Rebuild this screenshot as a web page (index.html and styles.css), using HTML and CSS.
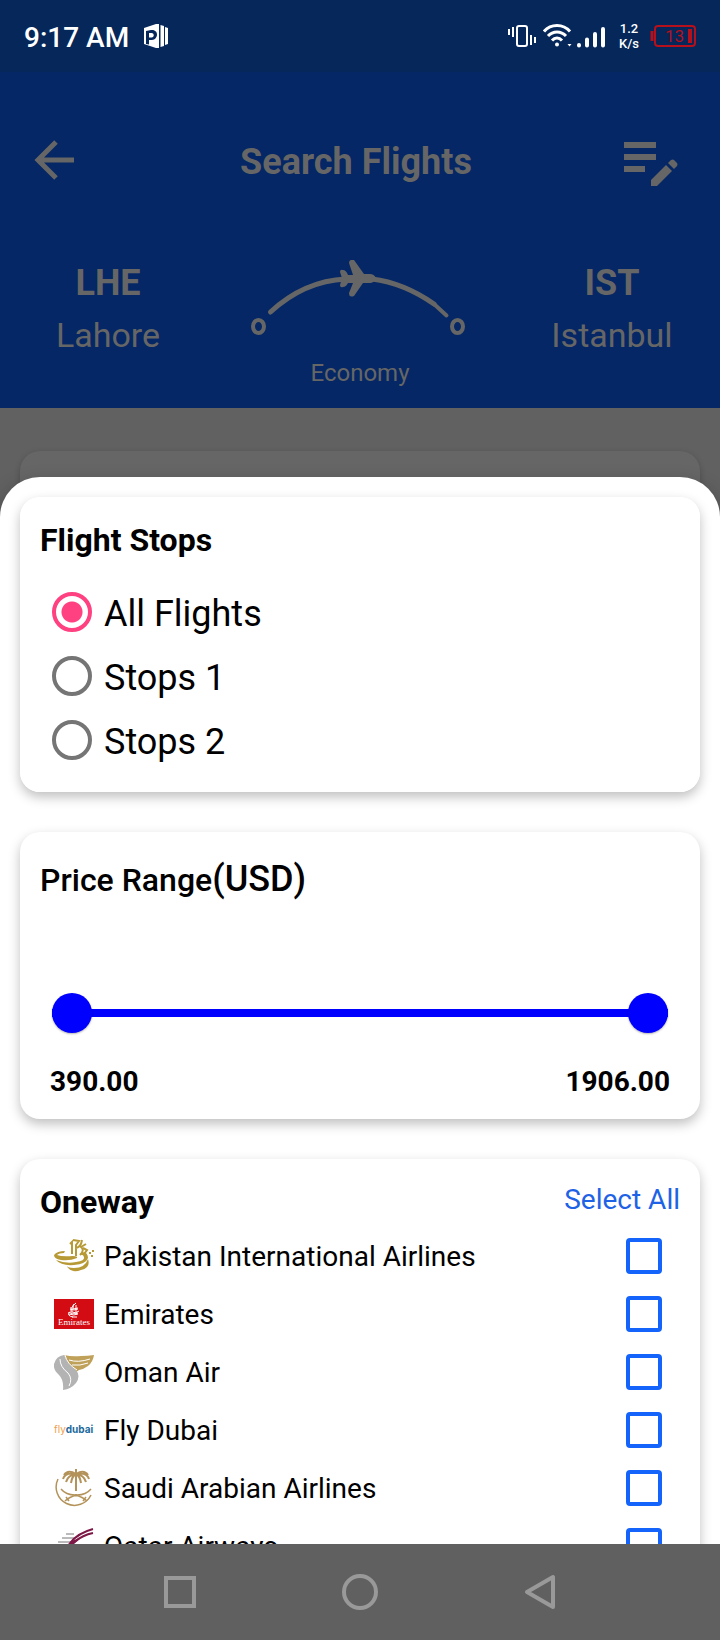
FILE: index.html
```html
<!DOCTYPE html>
<html lang="en">

<head>
  <meta charset="UTF-8">
  <meta name="viewport" content="width=device-width, initial-scale=1.0">
  <title>Search Flights</title>
  <link rel="stylesheet" href="styles.css">
</head>

<body>
  <div class="status-bar">
    <span class="status-time">9:17 AM</span>
    <svg class="status-app" width="24" height="24" viewBox="0 0 24 24" fill="#fff">
      <path fill-rule="evenodd" d="M0 4 L12 0 H15 V24 H12 L0 20 Z M2 7 V20 L5 20.500 V16 H8 C11 16 13 13 13 10.500 C13 7 10 5.500 7 6 Z M5 9 H7.500 C10.500 9 10.500 13.500 7.500 13.500 H5 Z" />
      <path d="M16.500 1 L20 2 V22 L16.500 23 Z M21 3 L24 4 V20 L21 21 Z" />
    </svg>
    <div class="status-icons">
      <svg width="28" height="24" viewBox="0 0 28 24" fill="none" stroke="#fff" stroke-width="2">
        <rect x="9" y="2" width="10" height="20" rx="2" />
        <path d="M1 5v6M5 3v10M23 11v10M27 13v6" />
      </svg>
      <svg class="icon-wifi" width="30" height="24" viewBox="0 0 30 24" fill="none" stroke="#fff" stroke-width="3">
        <path d="M1 7.500C8 -.5 20 -.5 27 7.500M5 12c5-5.500 13-5.500 18 0M9 16.500c3-3.500 7-3.500 10 0" />
        <circle cx="14" cy="20.500" r="2" fill="#fff" stroke="none" />
        <path d="M24.500 20h4l-2 2.500z" fill="#fff" stroke="none" />
      </svg>
      <svg class="icon-signal" width="28" height="24" viewBox="0 0 28 24" stroke="#fff" stroke-width="4" stroke-linecap="round">
        <path d="M2 21v.5M10 15.500v6M18 10v11.500M26 5v16.500" />
      </svg>
      <span class="net-speed">1.2<br>K/s</span>
      <svg width="46" height="24" viewBox="0 0 46 24" fill="none" stroke="#b5101c" stroke-width="2">
        <rect x="5" y="2" width="40" height="20" rx="3" />
        <path d="M2 7v10" stroke-width="3" />
        <path d="M40 5v14" stroke-width="4" />
        <text x="15" y="18" class="battery-level">13</text>
      </svg>
    </div>
  </div>

  <header class="header">
    <div class="toolbar">
      <button class="icon-button" type="button" aria-label="Back">
        <svg width="40" height="48" viewBox="0 0 40 48" fill="none" stroke="#666" stroke-width="5">
          <path d="M22 4 L4 22 L22 40 M4 22 H40" />
        </svg>
      </button>
      <h1 class="title">Search Flights</h1>
      <button class="icon-button icon-button-end" type="button" aria-label="Edit search">
        <svg width="54" height="48" viewBox="0 0 54 48" fill="#666">
          <path d="M0 4h32v6H0zM0 16h32v6H0zM0 28h21v6H0z" />
          <path d="M27 48v-6L42 27l6 6L33 48z" />
          <path d="M44 25l3-3q2-1 3 0l3 3q1 1 0 3l-3 3z" />
        </svg>
      </button>
    </div>
    <div class="route">
      <div class="city">
        <strong class="code">LHE</strong>
        <span class="city-name">Lahore</span>
      </div>
      <div class="path">
        <svg width="220" height="76" viewBox="250 260 220 76" fill="none" stroke="#666">
          <ellipse cx="258.500" cy="326.500" rx="5.500" ry="6.500" stroke-width="4" />
          <ellipse cx="457.500" cy="326.500" rx="5.500" ry="6.500" stroke-width="4" />
          <path d="M270.500 312 Q304 281 346 279" stroke-width="5" stroke-linecap="round" />
          <path d="M372 279 Q404 283 434 304" stroke-width="5" stroke-linecap="round" />
          <path d="M434 304 L446.500 315.500" stroke-width="4" stroke-linecap="round" />
          <path fill="#666" stroke="none" d="M340 272q0-3 3-2q3 0 5 5h5l-4-12q0-4 5-3l10 14h6q4 0 6 4q-2 5-6 5h-7l-9 13q-5 2-5-3l4-10h-5q-2 4-5 4q-3 1-3-2l2-7z" />
        </svg>
        <span class="cabin">Economy</span>
      </div>
      <div class="city">
        <strong class="code">IST</strong>
        <span class="city-name">Istanbul</span>
      </div>
    </div>
  </header>

  <div class="backdrop">
    <div class="result-card"></div>
  </div>

  <main class="sheet">
    <fieldset class="card">
      <legend class="card-title">Flight Stops</legend>
      <div class="radio-list">
        <label class="radio-row"><input class="radio" type="radio" name="stops" checked><span class="radio-text">All Flights</span></label>
        <label class="radio-row"><input class="radio" type="radio" name="stops"><span class="radio-text">Stops 1</span></label>
        <label class="radio-row"><input class="radio" type="radio" name="stops"><span class="radio-text">Stops 2</span></label>
      </div>
    </fieldset>

    <section class="card price-card">
      <h2 class="card-title price-title">Price Range<span class="currency">(USD)</span></h2>
      <div class="slider">
        <input class="range" type="range" min="390" max="1906" value="390" aria-label="Minimum price">
        <input class="range" type="range" min="390" max="1906" value="1906" aria-label="Maximum price">
      </div>
      <div class="price-labels">
        <span>390.00</span>
        <span>1906.00</span>
      </div>
    </section>

    <section class="card">
      <div class="card-head">
        <h2 class="card-title">Oneway</h2>
        <button class="select-all" type="button">Select All</button>
      </div>
      <ul class="airlines">
        <li>
          <label class="airline">
            <svg class="logo" width="40" height="40" viewBox="0 0 40 40" fill="none" stroke="#b79a35" stroke-width="2">
              <path fill="#b79a35" stroke="none" d="M0 19q3-4 11-4l-1 2q-5 0-7 2q5 2 16 1q5 0 4 2q-7 3-16 2q-7-1-7-5z" />
              <path fill="#b79a35" stroke="none" d="M2 24q10 4 20 2q9-1 8-5q-1-3-4-2l2-3q6 0 6 6q-2 6-14 7q-13 1-18-5z" />
              <path fill="#b79a35" stroke="none" d="M12 29q1 3 8 3q11 0 14-9q3 9-7 11q-10 4-15-5z" />
              <path d="M18 18V6l-2 2M22 20V9l3-4l-6-1M22 12q5-1 6-8M26 19q5-5 1-8l5-3M29 12l4 2l-3 4" />
              <path d="M35 17h2M38 15h2M37 20h2" />
            </svg>
            <span class="airline-name">Pakistan International Airlines</span>
            <input class="check" type="checkbox">
          </label>
        </li>
        <li>
          <label class="airline">
            <svg class="logo" width="40" height="40" viewBox="0 0 40 40">
              <path d="M0 5h40v30H0z" fill="#d30c14" />
              <path d="M19 23q-6-1-4-5q3 3 9 1M22 9q-4 2-3 6l5-1M20 10q-3 3-2 8q4 2 7-1M17 13v6M22 11v10M15 20q5 2 9 0M18 23h5M16 15q4 2 8 0" fill="none" stroke="#fff" />
              <text x="20" y="31" text-anchor="middle" class="emirates-text">Emirates</text>
            </svg>
            <span class="airline-name">Emirates</span>
            <input class="check" type="checkbox">
          </label>
        </li>
        <li>
          <label class="airline">
            <svg class="logo" width="40" height="40" viewBox="0 0 40 40">
              <path d="M10 3q8 2 17 1q7 0 13-1q-1 7-6 11q-4 3-9 4q-3 2-4 3q-7-8-11-18z" fill="#bfa15a" />
              <path d="M10 3Q2 4 0 12q-1 6 5 11q5 5 4 15q8-1 13-7q5-7 0-13Q13 11 10 3z" fill="#b3b3b3" />
              <path d="M6 7q0 8 8 14q5 6 1 13M11 3q2 9 12 15M15 8q9 3 21-1M18 13q8 1 16-2" fill="none" stroke="#fff" />
            </svg>
            <span class="airline-name">Oman Air</span>
            <input class="check" type="checkbox">
          </label>
        </li>
        <li>
          <label class="airline">
            <svg class="logo" width="40" height="40" viewBox="0 0 40 40">
              <text x="0" y="23" class="fly-text">fly<tspan class="dubai-text">dubai</tspan></text>
            </svg>
            <span class="airline-name">Fly Dubai</span>
            <input class="check" type="checkbox">
          </label>
        </li>
        <li>
          <label class="airline">
            <svg class="logo" width="40" height="40" viewBox="0 0 40 40" fill="none" stroke="#b4935a">
              <path d="M4 11A18 18 0 1 0 37 27" stroke-width="1.500" />
              <path d="M22 7v16" stroke-width="2" />
              <path d="M22 6q-8-5-12 1M22 6q8-5 12 1M22 6q-11-2-13 5M22 6q11-2 13 5M22 6q-8 1-10 8M22 6q8 1 10 8M22 6q-4 2-5 9M22 6q4 2 5 9M22 8V1" stroke-width="2" />
              <path d="M7 21q5 6 14 6q8 2 12 6M37 21q-5 6-14 6q-8 2-12 6M12 29l3 4M32 29l-3 4" stroke-width="1.500" />
            </svg>
            <span class="airline-name">Saudi Arabian Airlines</span>
            <input class="check" type="checkbox">
          </label>
        </li>
        <li>
          <label class="airline">
            <svg class="logo" width="40" height="40" viewBox="0 0 40 40" fill="none">
              <path d="M12 8h8M8 12h12M4 16h13M1 20h14" stroke="#777" />
              <path d="M39 3Q24 7 16 17M39 7Q29 9 20 16" stroke="#7d1746" stroke-width="2" />
              <path d="M14 18q5-5 12-5l-6 5q8 2 9 12q-7-8-15-12z" fill="#7d1746" />
            </svg>
            <span class="airline-name">Qatar Airways</span>
            <input class="check" type="checkbox">
          </label>
        </li>
      </ul>
    </section>
  </main>

  <nav class="nav-bar">
    <button class="icon-button" type="button" aria-label="Recent apps">
      <svg width="36" height="36" viewBox="0 0 36 36" fill="none" stroke="#999" stroke-width="4">
        <rect x="4" y="4" width="28" height="28" />
      </svg>
    </button>
    <button class="icon-button" type="button" aria-label="Home">
      <svg width="36" height="36" viewBox="0 0 36 36" fill="none" stroke="#999" stroke-width="4">
        <circle cx="18" cy="18" r="16" />
      </svg>
    </button>
    <button class="icon-button" type="button" aria-label="Back">
      <svg width="36" height="36" viewBox="0 0 36 36" fill="none" stroke="#999" stroke-width="4" stroke-linejoin="round">
        <path d="M31 3v30L5 18z" />
      </svg>
    </button>
  </nav>
</body>

</html>
```
FILE: styles.css
```css
* {
  box-sizing: border-box;
}

body {
  margin: 0;
  height: 100vh;
  display: flex;
  flex-direction: column;
  overflow: hidden;
  font-family: Roboto, sans-serif;
  color: #000;
  background: #616161;
}

svg {
  display: block;
}

h1,
h2,
ul {
  margin: 0;
  padding: 0;
}

button {
  padding: 0;
  border: none;
  background: none;
  font-family: inherit;
  cursor: pointer;
}

/* Status bar */

.status-bar {
  flex: none;
  height: 72px;
  padding: 0 24px;
  display: flex;
  align-items: center;
  color: #fff;
  background: #052759;
}

.status-time {
  padding-top: 3px;
  font-size: 28px;
  font-weight: 500;
  line-height: 32px;
}

.status-app {
  margin-left: 15px;
}

.status-icons {
  margin-left: auto;
  display: flex;
  align-items: center;
}

.icon-wifi {
  margin-left: 7px;
}

.icon-signal {
  margin-left: 4px;
}

.net-speed {
  margin: 0 11px 0 14px;
  font-size: 13px;
  font-weight: 500;
  line-height: 15px;
  text-align: center;
}

.battery-level {
  font-size: 17px;
  fill: #b5101c;
  stroke: none;
}

/* Header */

.header {
  flex: none;
  padding-top: 66px;
  color: #666;
  background: #052765;
}

.toolbar {
  display: grid;
  grid-template-columns: 1fr auto 1fr;
  align-items: center;
  padding: 0 42px 0 34px;
}

.icon-button-end {
  justify-self: end;
}

.toolbar .icon-button:first-child {
  justify-self: start;
}

.title {
  font-size: 36px;
  font-weight: 700;
  line-height: 42px;
}

.route {
  display: grid;
  grid-template-columns: 3fr 4fr 3fr;
  padding: 74px 0 21px;
}

.city,
.path {
  display: flex;
  flex-direction: column;
  align-items: center;
}

.city {
  padding-top: 2px;
  gap: 10px;
}

.code {
  font-size: 36px;
  line-height: 42px;
}

.city-name {
  font-size: 34px;
  line-height: 42px;
}

.path {
  gap: 23px;
}

.cabin {
  font-size: 24px;
  line-height: 28px;
}

/* Dimmed results behind the sheet */

.backdrop {
  flex: none;
  padding: 43px 20px 0;
}

.result-card {
  height: 66px;
  border-radius: 20px 20px 0 0;
  background: #666;
  box-shadow: 0 2px 6px rgba(0, 0, 0, 0.2);
}

/* Filter sheet */

.sheet {
  flex: 1;
  min-height: 0;
  margin-top: -40px;
  padding: 20px 20px 0;
  display: flex;
  flex-direction: column;
  gap: 40px;
  overflow: hidden;
  border-radius: 40px 40px 0 0;
  background: #fff;
  box-shadow: 0 8px 20px rgba(0, 0, 0, 0.3);
  position: relative;
}

.card {
  flex: none;
  min-width: 0;
  margin: 0;
  padding: 24px 20px 20px;
  border: none;
  border-radius: 20px;
  background: #fff;
  box-shadow: 0 5px 12px rgba(0, 0, 0, 0.25);
}

.card-title {
  padding: 0;
  font-size: 32px;
  font-weight: 700;
  line-height: 38px;
}

/* floated so the legend sits inside the card padding */
legend.card-title {
  float: left;
}

.radio-list {
  clear: both;
  padding: 21px 0 0 12px;
}

.radio-row {
  display: flex;
  align-items: center;
  gap: 12px;
  height: 64px;
  font-size: 36px;
}

.radio-text {
  padding-top: 4px;
}

.radio {
  appearance: none;
  width: 40px;
  height: 40px;
  margin: 0;
  border: 4px solid #757575;
  border-radius: 50%;
}

.radio:checked {
  border-color: #ff4081;
  background: radial-gradient(circle, #ff4081 10px, #fff 11px);
}

/* Price slider */

.price-card {
  padding: 28px 20px 21px;
}

.price-title {
  font-weight: 500;
}

.currency {
  font-size: 36px;
}

.slider {
  display: grid;
  align-items: center;
  margin: 94px 12px 33px;
  background: linear-gradient(#00f, #00f) center / 100% 8px no-repeat;
}

.range {
  grid-area: 1 / 1;
  appearance: none;
  width: 100%;
  height: 40px;
  margin: 0;
  background: none;
  pointer-events: none;
}

.range::-webkit-slider-thumb {
  appearance: none;
  width: 40px;
  height: 40px;
  border-radius: 50%;
  background: #00f;
  box-shadow: 0 1px 2px rgba(0, 0, 0, 0.3);
  pointer-events: auto;
}

.price-labels {
  display: flex;
  justify-content: space-between;
  padding: 0 10px;
  font-size: 28px;
  font-weight: 700;
  line-height: 32px;
}

/* Airlines */

.card-head {
  display: flex;
  align-items: flex-start;
  justify-content: space-between;
}

.select-all {
  font-size: 28px;
  line-height: 34px;
  color: #1e62e6;
}

.airlines {
  margin-top: 6px;
  list-style: none;
}

.airline {
  display: flex;
  align-items: center;
  height: 58px;
  padding: 0 18px 0 14px;
}

.logo {
  flex: none;
}

.airline-name {
  flex: 1;
  padding-left: 10px;
  font-size: 28px;
}

.check {
  appearance: none;
  width: 36px;
  height: 36px;
  margin: 0;
  border: 4px solid #1463fa;
  border-radius: 4px;
}

.check:checked {
  background: #1463fa;
}

.emirates-text {
  font-family: "Liberation Serif", serif;
  font-size: 9px;
  fill: #fff;
}

.fly-text {
  font-family: Inter, sans-serif;
  font-size: 10px;
  fill: #f2a04a;
}

.dubai-text {
  font-weight: 700;
  fill: #1c6a9c;
}

/* System navigation */

.nav-bar {
  flex: none;
  height: 96px;
  padding: 0 90px;
  display: flex;
  align-items: center;
  justify-content: space-around;
  background: #606060;
  position: relative;
}
```
